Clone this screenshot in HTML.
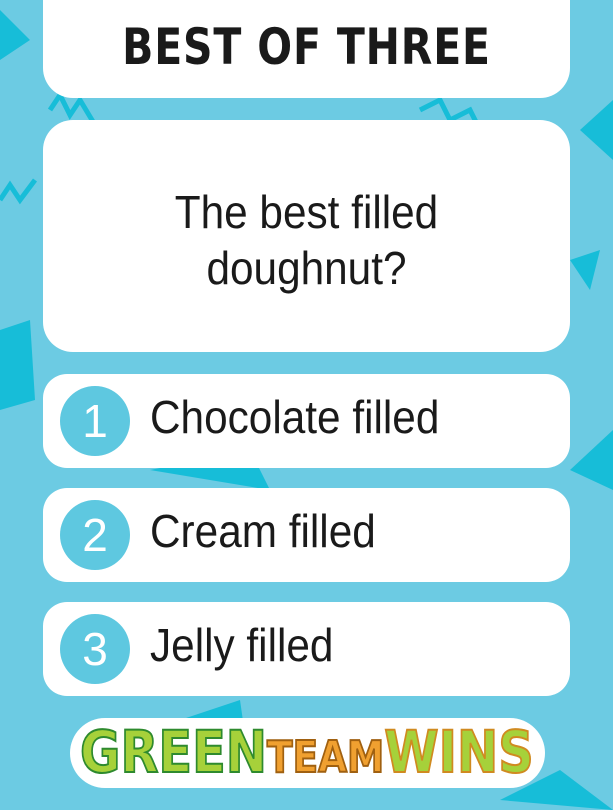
<!DOCTYPE html>
<html><head><style>
body{margin:0;width:613px;height:810px;overflow:hidden;background:#6ccbe3;position:relative;font-family:"Liberation Sans",sans-serif}
.card{position:absolute;left:43px;width:527px;background:#fff;border-radius:24px}
.t{position:absolute;color:#1a1a1a;white-space:nowrap}
.c{position:absolute;left:17px;top:12px;width:70px;height:70px;border-radius:50%;background:#5ec8e0;color:#fff;font-size:46px;text-align:center;line-height:70px}
.o{position:absolute;left:107px;top:16px;font-size:46px;color:#1a1a1a;transform:scaleX(.92);transform-origin:left;white-space:nowrap}
</style></head><body>
<svg width="613" height="810" style="position:absolute;left:0;top:0" fill="#17bdd8">
<polygon points="0,10 30,40 0,60"/><polygon points="580,130 613,100 613,160"/>
<polygon points="0,330 30,320 35,400 0,410"/><polygon points="570,470 613,430 613,490"/>
<polygon points="150,470 250,450 270,490"/><polygon points="570,260 600,250 590,290"/>
<polygon points="150,730 240,700 250,770"/><polygon points="500,800 560,770 613,810"/>
<polyline points="50,110 60,95 70,115 80,100 95,125" fill="none" stroke="#17bdd8" stroke-width="5"/>
<polyline points="420,110 440,100 450,120 470,110 480,130" fill="none" stroke="#17bdd8" stroke-width="5"/>
<polyline points="0,200 10,185 20,200 35,180" fill="none" stroke="#17bdd8" stroke-width="5"/>
</svg>
<div class="card" style="top:-30px;height:128px;border-radius:30px"><div class="t" style="left:0;width:527px;text-align:center;top:48px;font-size:50px;font-weight:900;letter-spacing:1px;font-family:'DejaVu Sans',sans-serif;transform:scaleX(.82)">BEST OF THREE</div></div>
<div class="card" style="top:120px;height:232px;border-radius:30px"><div class="t" style="left:0;width:527px;text-align:center;top:64px;font-size:46px;line-height:56px;transform:scaleX(.92)">The best filled<br>doughnut?</div></div>
<div class="card" style="top:374px;height:94px"><div class="c">1</div><div class="o">Chocolate filled</div></div>
<div class="card" style="top:488px;height:94px"><div class="c">2</div><div class="o">Cream filled</div></div>
<div class="card" style="top:602px;height:94px"><div class="c">3</div><div class="o">Jelly filled</div></div>
<div style="position:absolute;left:70px;top:718px;width:475px;height:70px;background:#fff;border-radius:35px"></div>
<div style="position:absolute;left:80px;top:718px;font-size:58px;font-weight:900;font-family:'DejaVu Sans',sans-serif;white-space:nowrap;transform:scaleX(.85);transform-origin:left;-webkit-text-stroke:2px #2e8a2e">
<span style="color:#a6d13a">GREEN</span><span style="color:#f0a030;-webkit-text-stroke:2px #a06010;font-size:44px">TEAM</span><span style="color:#a6d13a;-webkit-text-stroke:2px #d08a20">WINS</span></div>
</body></html>
